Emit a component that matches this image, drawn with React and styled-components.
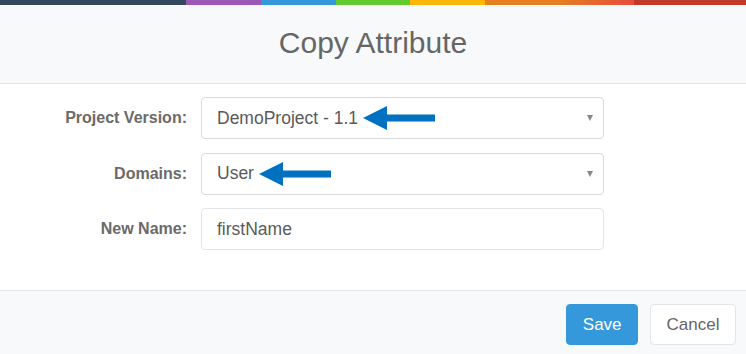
import React from "react";
import styled, { createGlobalStyle } from "styled-components";

const GlobalStyle = createGlobalStyle`
  body {
    margin: 0;
    background: #fff;
    font-family: "Liberation Sans", Arial, sans-serif;
  }
`;

const Modal = styled.div`
  width: 746px;
  height: 354px;
  display: flex;
  flex-direction: column;
  background: #fff;
  overflow: hidden;
`;

const ColorLine = styled.div`
  height: 5px;
  background: linear-gradient(
    to right,
    #34495e, #34495e 25%,
    #9b59b6 25%, #9b59b6 35%,
    #3498db 35%, #3498db 45%,
    #62cb31 45%, #62cb31 55%,
    #ffb606 55%, #ffb606 65%,
    #e67e22 65%, #e67e22 75%,
    #e74c3c 85%, #e74c3c 85%,
    #c0392b 85%, #c0392b 100%
  );
`;

const Header = styled.header`
  height: 78px;
  display: flex;
  align-items: center;
  justify-content: center;
  background: #f7f9fa;
  border-bottom: 1px solid #e4e5e7;
`;

const Title = styled.h4`
  margin: 0 0 2px;
  font-size: 30px;
  font-weight: 400;
  color: #666;
`;

const Body = styled.div`
  flex: 1;
  padding: 13px 0 0;
`;

const Form = styled.div`
  display: grid;
  grid-template-columns: 187px 403px;
  column-gap: 14px;
  row-gap: 13.5px;
`;

const Label = styled.label`
  display: flex;
  align-items: center;
  justify-content: flex-end;
  font-size: 16px;
  font-weight: 700;
  color: #6a6a6a;
`;

const Field = styled.div`
  height: 42px;
  box-sizing: border-box;
  display: flex;
  align-items: center;
  padding: 0 9px 0 15px;
  border: ${(p) => (p.$select ? "1.5px solid #d9d9d9" : "1px solid #e4e5e7")};
  border-radius: 4px;
  background: #fff;
  font-size: 17.5px;
  color: #5a5a5a;
`;

const Value = styled.span`
  white-space: pre;
`;

const Arrow = styled.svg`
  margin-left: 5px;
  flex: none;
`;

const Caret = styled.span`
  margin-left: auto;
  margin-right: 1px;
  width: 0;
  height: 0;
  border-left: 3.5px solid transparent;
  border-right: 3.5px solid transparent;
  border-top: 6px solid #888;
`;

const Footer = styled.footer`
  height: 64px;
  box-sizing: border-box;
  display: flex;
  justify-content: flex-end;
  align-items: flex-start;
  gap: 12px;
  padding: 13px 10px 0 0;
  background: #f7f9fa;
  border-top: 1px solid #e4e5e7;
`;

const Button = styled.button`
  height: 41px;
  padding: 0 15.5px;
  border-radius: 4px;
  border: 1px solid ${(p) => (p.$primary ? "#3498db" : "#e4e5e7")};
  background: ${(p) => (p.$primary ? "#3498db" : "#fff")};
  color: ${(p) => (p.$primary ? "#fff" : "#666")};
  font-family: "Liberation Sans", Arial, sans-serif;
  font-size: 17px;
  cursor: pointer;
`;

const PointerArrow = () => (
  <Arrow width="72" height="24" viewBox="0 0 72 24">
    <polygon points="0,12 24,0 24,8.5 72,8.5 72,15.5 24,15.5 24,24" fill="#0070c0" />
  </Arrow>
);

export default function App() {
  return (
    <>
      <GlobalStyle />
      <Modal>
        <ColorLine />
        <Header>
          <Title>Copy Attribute</Title>
        </Header>
        <Body>
          <Form>
            <Label>Project Version:</Label>
            <Field $select>
              <Value>DemoProject - 1.1</Value>
              <PointerArrow />
              <Caret />
            </Field>
            <Label>Domains:</Label>
            <Field $select>
              <Value>User</Value>
              <PointerArrow />
              <Caret />
            </Field>
            <Label>New Name:</Label>
            <Field>
              <Value>firstName</Value>
            </Field>
          </Form>
        </Body>
        <Footer>
          <Button $primary>Save</Button>
          <Button>Cancel</Button>
        </Footer>
      </Modal>
    </>
  );
}
